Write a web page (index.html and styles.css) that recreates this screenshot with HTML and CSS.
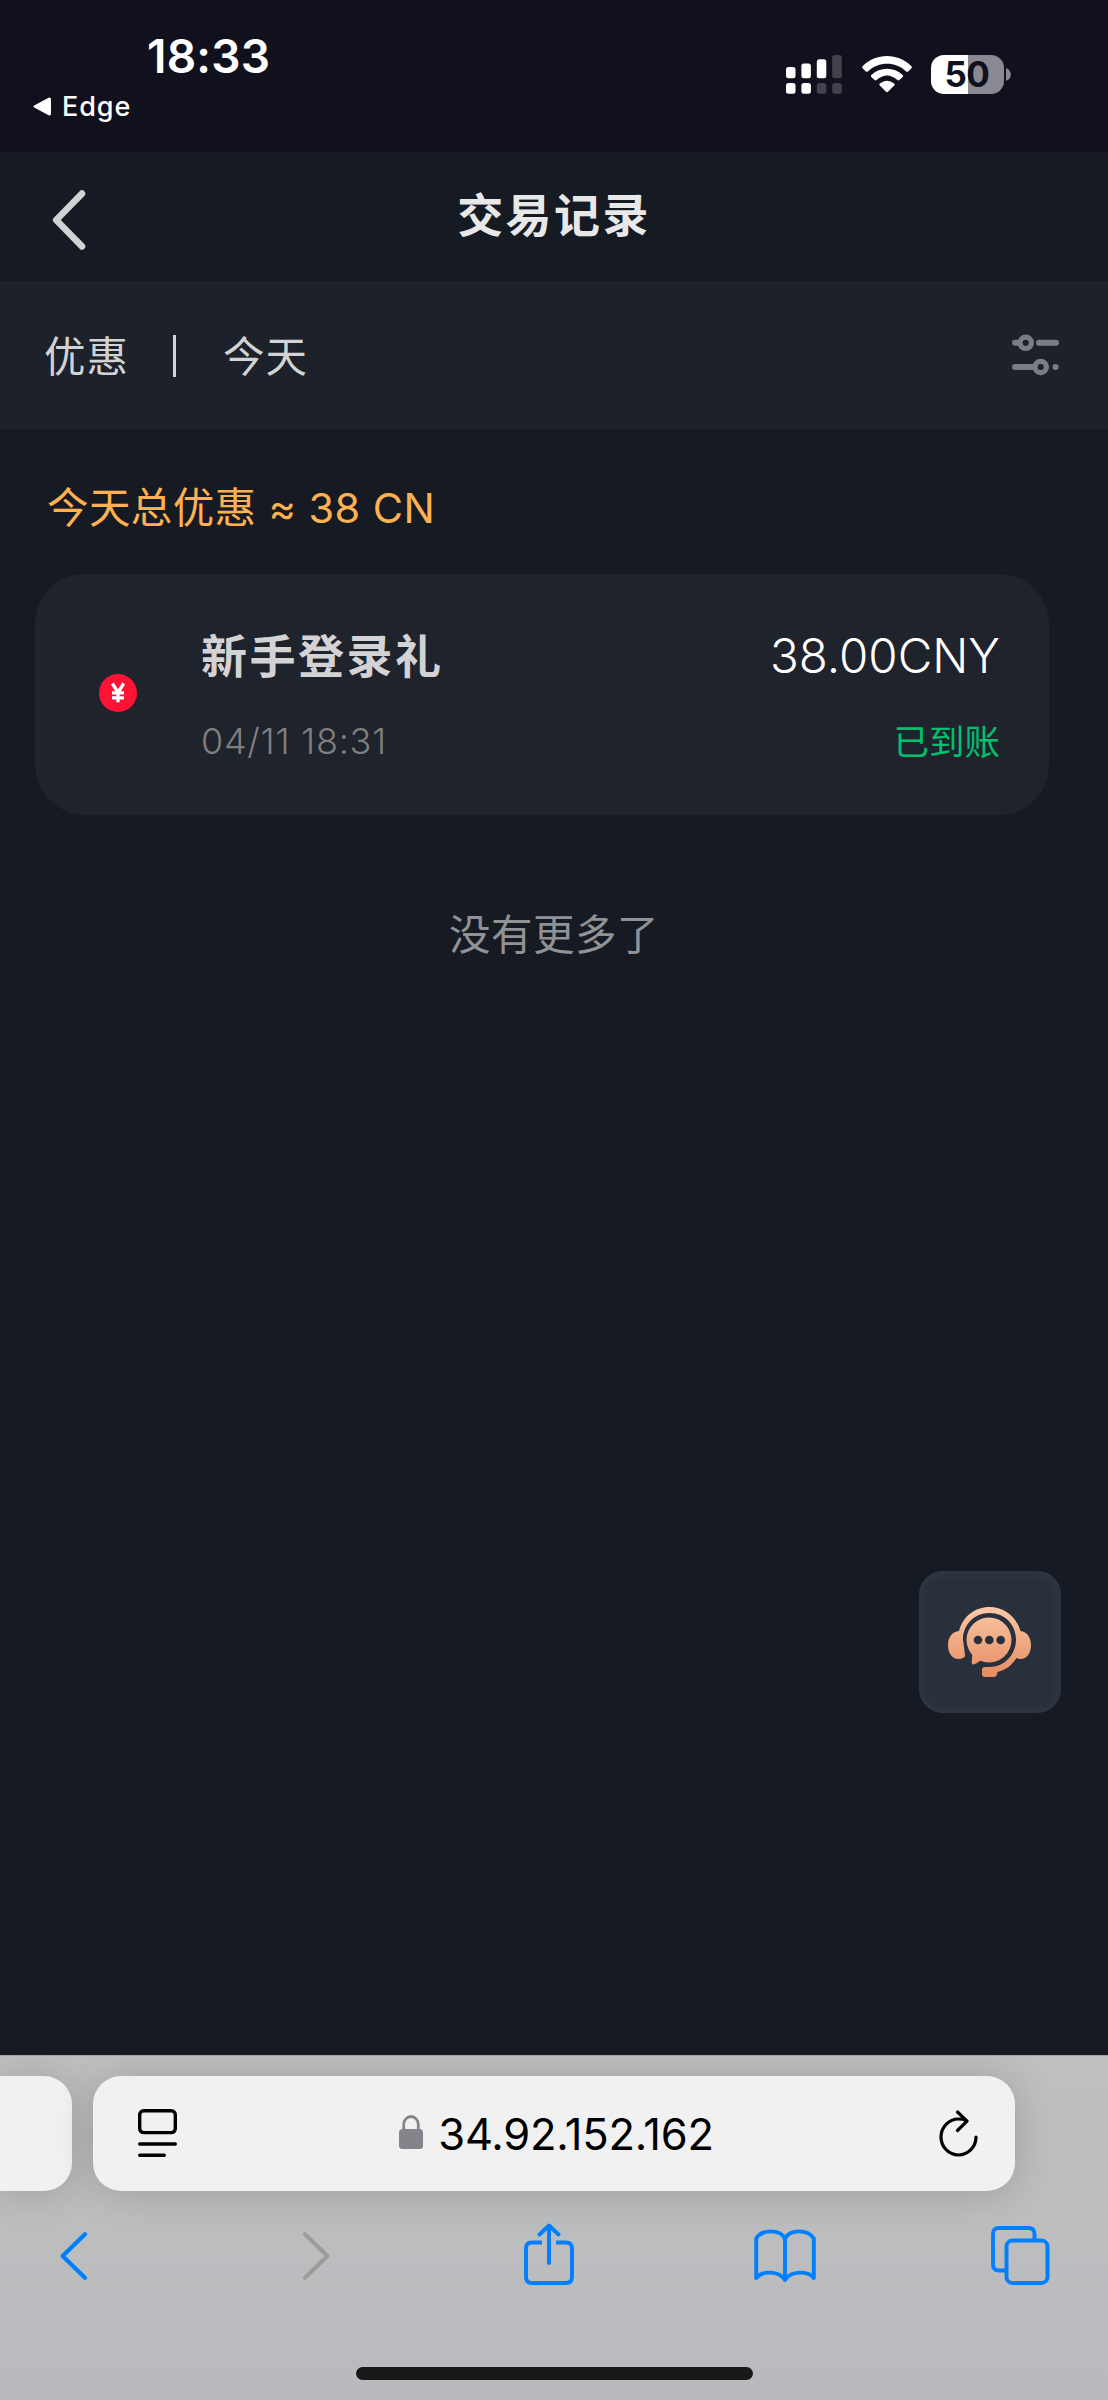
FILE: index.html
```html
<!DOCTYPE html>
<html lang="zh-CN">
<head>
<meta charset="utf-8">
<title>交易记录</title>
<link rel="stylesheet" href="styles.css">
</head>
<body>
<div class="screen">
  <div class="status">
    <div class="status-left">
      <div class="clock">18:33</div>
      <div class="return">
        <svg width="18" height="19" viewBox="0 0 18 19"><path d="M1.2 8.4 15.6.7Q18 0 18 2.5v14q0 2.5-2.4 1.8L1.2 10.6q-1.6-1.1 0-2.2z" fill="#fff"/></svg>
        <span>Edge</span>
      </div>
    </div>
    <div class="status-right">
      <svg class="signal" width="56" height="39" viewBox="0 0 56 39">
        <g fill="#fff"><rect y="12" width="9.5" height="11.2" rx="2.5"/><rect x="15.4" y="8.5" width="9.5" height="14.7" rx="2.5"/><rect x="30.8" y="4.2" width="9.5" height="19" rx="2.5"/><rect y="28" width="9.5" height="10.8" rx="2.5"/><rect x="15.4" y="28" width="9.5" height="10.8" rx="2.5"/></g>
        <g fill="#43424c"><rect x="46.2" y="0" width="9.6" height="23.2" rx="2.5"/><rect x="30.8" y="28" width="9.5" height="10.8" rx="2.5"/><rect x="46.2" y="28" width="9.6" height="10.8" rx="2.5"/></g>
      </svg>
      <svg class="wifi" width="50" height="37" viewBox="0 0 50 37" fill="#fff">
        <path d="M.6 10.2C14-3.3 36-3.3 49.4 10.2q1 1 0 2l-3.2 3.2q-1 .9-2 0C33.500 5.100 16.500 5.100 5.800 15.400q-1 .9-2 0L.6 12.200q-1-1 0-2z"/>
        <path d="M9.300 18.900C18 10.600 32 10.600 40.700 18.900q1 1 0 2l-3.300 3.200q-1 .9-2 0-10.400-9-20.800 0-1 .9-2 0L9.300 20.900q-1-1 0-2z"/>
        <path d="M17.800 27.600Q25 21.800 32.200 27.600q1.100 1 0 2L26 35.800q-1 .9-2 0L17.800 29.600q-1.100-1 0-2z"/>
      </svg>
      <div class="battery"><span>50</span></div>
      <svg class="nub" width="5" height="13" viewBox="0 0 5 13"><path d="M0 0Q4.800 2 4.800 6.500T0 13z" fill="#8a8992"/></svg>
    </div>
  </div>

  <div class="header">
    <svg class="back" width="34" height="60" viewBox="0 0 34 60"><path d="M30 3.600 4.200 30 30 56.400" fill="none" stroke="#d2d2d4" stroke-width="6.600" stroke-linecap="round" stroke-linejoin="round"/></svg>
    <h1>交易记录</h1>
  </div>

  <div class="filters">
    <span>优惠</span><i class="rule"></i><span>今天</span>
    <svg class="tune" width="47" height="42" viewBox="0 0 47 42" fill="none" stroke="#7b7d82" stroke-width="6" stroke-linecap="round">
      <path d="M3 8.800h4M27 8.800h17M3 33h18M43.500 33h.1"/><circle cx="13.700" cy="8.800" r="5.700" stroke-width="5.200"/><circle cx="28.700" cy="33" r="5.700" stroke-width="5.200"/>
    </svg>
  </div>

  <div class="content">
    <p class="total">今天总优惠 ≈ 38 CN</p>
    <div class="card">
      <svg class="coin" width="38" height="38" viewBox="0 0 38 38"><circle cx="19" cy="19" r="19" fill="#ff1236"/><path d="M13.300 9.500 19 18.500l5.700-9M19 18v10.200M13 18.900h12M13 23.800h12" fill="none" stroke="#fff" stroke-width="3.300"/></svg>
      <div class="info"><div class="name">新手登录礼</div><div class="date">04/11 18:31</div></div>
      <div class="result"><div class="amount">38.00CNY</div><div class="state">已到账</div></div>
    </div>
    <p class="more">没有更多了</p>
    <div class="support">
      <svg width="84" height="70" viewBox="0 0 84 70">
        <defs><linearGradient id="peach" x1="0" y1="0" x2="0" y2="70" gradientUnits="userSpaceOnUse"><stop offset="0" stop-color="#fac8a6"/><stop offset="1" stop-color="#e68b63"/></linearGradient></defs>
        <path fill="url(#peach)" d="M11 24C15 9 27 0 41.500 0S68 9 72.500 24C79 24.500 83 31 83 38c0 8-4 14-10.500 14q-2.500 0-4-1C64 58 58 63 49.500 65Q49 70 46 70H37q-3 0-3-3V63q0-3 3-3H41.500C56 60 68 48 68 32.500 68 18 57 6 41.500 6S15 18 15 32.500L17 48q.2 2-1.500 2.800Q13 52 10.500 52C4 52 0 46 0 38S4.500 24.500 11 24z"/>
        <path fill="url(#peach)" d="M41.500 10.500a22.500 22.500 0 1 1-9.300 43.200Q29 56.500 25.500 57.500q-2 .2-1.800-1.700L24.300 48A22.500 22.500 0 0 1 41.500 10.500z"/>
        <g fill="#28303c"><circle cx="30" cy="33" r="4.300"/><circle cx="41.300" cy="33" r="4.300"/><circle cx="52.700" cy="33" r="4.300"/></g>
      </svg>
    </div>
  </div>

  <div class="browser">
    <div class="tabs">
      <div class="tab-prev"></div>
      <div class="address">
        <svg class="reader" width="39" height="49" viewBox="0 0 39 49" fill="none" stroke="#000" stroke-width="3.400" stroke-linecap="round"><rect x="1.700" y="1.700" width="35.600" height="21.900" rx="4"/><path d="M1.700 35h35.600M1.700 46.200h24.600"/></svg>
        <div class="url">
          <svg width="24" height="34" viewBox="0 0 24 34"><rect y="14" width="24" height="20" rx="3.500" fill="#85848a"/><path d="M4.700 15V9.500a7.300 8 0 0 1 14.600 0V15" fill="none" stroke="#85848a" stroke-width="2.800"/></svg>
          <span>34.92.152.162</span>
        </div>
        <svg class="reload" width="39" height="48" viewBox="0 0 39 48" fill="none" stroke="#000" stroke-width="3.200" stroke-linecap="round" stroke-linejoin="round"><path d="M37 27A17.500 18 0 1 1 19.500 9Q24 9 27.500 10.400M18.500 2 28 11.200 18.500 20.500"/></svg>
      </div>
    </div>
    <div class="toolbar">
      <svg width="28" height="48" viewBox="0 0 28 48" fill="none" stroke="#007fff" stroke-width="4.200" stroke-linecap="round" stroke-linejoin="round"><path d="M25 2.300 2.600 24 25 45.700"/></svg>
      <svg class="fwd" width="28" height="48" viewBox="0 0 28 48" fill="none" stroke="#9c9c9e" stroke-width="4.200" stroke-linecap="round" stroke-linejoin="round"><path d="M3 2.300 25.400 24 3 45.700"/></svg>
      <svg class="share" width="50" height="62" viewBox="0 0 50 62" fill="none" stroke="#007fff" stroke-width="3.900" stroke-linecap="round" stroke-linejoin="round"><path d="M25 40V3M15.500 11.500 25 2.500l9.500 9"/><path stroke-linecap="butt" d="M18 19.500H8q-6 0-6 6V54q0 6 6 6H42q6 0 6-6V25.500q0-6-6-6H32"/></svg>
      <svg class="book" width="62" height="54" viewBox="0 0 62 54" fill="none" stroke="#007fff" stroke-width="3.900" stroke-linecap="round" stroke-linejoin="round"><path d="M31 9.500C26 0 8 0 2.200 9.500V49C8 41.500 25 41.500 31 51 37 41.500 54 41.500 59.800 49V9.500C54 0 36 0 31 9.500V51"/></svg>
      <svg class="copies" width="59" height="61" viewBox="0 0 59 61" fill="none" stroke="#007fff" stroke-width="3.900"><rect x="15.500" y="14.500" width="41" height="42.500" rx="6"/><path d="M43.500 14V8q0-6-6-6H8Q2 2 2 8V38.500q0 6 6 6h7"/></svg>
    </div>
    <div class="home"></div>
  </div>
</div>
</body>
</html>
```
FILE: styles.css
```css
* { box-sizing: border-box; margin: 0; padding: 0; }
body { background: #161b23; }
svg { display: block; flex: none; }
.screen {
  width: 1108px;
  height: 2400px;
  display: flex;
  flex-direction: column;
  overflow: hidden;
  background: #161b23;
  font-family: Inter, "Noto Sans CJK SC", sans-serif;
  white-space: nowrap;
}
.status {
  height: 152px;
  background: #11101d;
  color: #fff;
  display: flex;
  justify-content: space-between;
}
.status-left { padding: 27px 0 0 33px; }
.clock { margin-left: 114px; font-size: 46px; line-height: 58px; font-weight: 600; letter-spacing: 0.200px; }
.return { display: flex; align-items: center; gap: 11px; height: 42px; font-size: 27px; font-weight: 500; letter-spacing: 0.900px; }
.status-right { display: flex; align-items: flex-start; padding: 55px 97px 0 0; }
.wifi { margin: 0.500px 19px 0 20px; }
.battery {
  width: 73px;
  height: 39px;
  border-radius: 13px;
  background: linear-gradient(90deg, #fff 37px, #8a8992 37px);
  color: #11101d;
  font-size: 35px;
  font-weight: 700;
  line-height: 39px;
  text-align: center;
  letter-spacing: -0.500px;
}
.nub { margin: 13px 0 0 2.500px; }

.header { height: 129px; display: grid; grid-template-columns: 160px 1fr 160px; align-items: center; }
.back { margin: 7px 0 0 52px; }
.header h1 { margin-top: -4px; text-align: center; font-size: 46px; line-height: 60px; font-weight: 600; letter-spacing: 2.400px; color: #e8e8e9; }

.filters {
  height: 148px;
  padding: 0 49px 0 44px;
  display: flex;
  align-items: center;
  background: #1d2129;
  color: #d2d3d4;
  font-size: 41.500px;
  letter-spacing: 1px;
}
.filters span { margin-top: -2px; }
.rule { width: 3px; height: 42px; margin: 1px 47px 0 44px; background: #d2d3d4; }
.tune { margin: -1px 0 0 auto; }

.content { flex: 1; padding: 49px 0 0; display: flex; flex-direction: column; }
.total { margin-left: 47px; font-size: 41.500px; line-height: 60px; letter-spacing: 0.400px; color: #ffb14f; }
.card {
  width: 1014px;
  height: 241px;
  margin: 36px 0 0 35px;
  padding: 51px 49px 0 64px;
  border-radius: 50px;
  background: #1f232b;
  display: flex;
}
.coin { margin-top: 49px; }
.info { margin-left: 64px; }
.name { font-size: 46px; line-height: 62px; font-weight: 600; letter-spacing: 2.500px; color: #d3d3d5; }
.date { margin-top: 31px; font-size: 36px; line-height: 46px; font-weight: 300; letter-spacing: 0.700px; color: #7f7f80; }
.result { margin-left: auto; text-align: right; }
.amount { font-size: 47.500px; line-height: 62px; font-weight: 300; color: #fff; }
.state { margin-top: 33px; font-size: 35.500px; line-height: 46px; color: #00c06f; }
.more { margin-top: 90px; text-align: center; font-size: 41.500px; line-height: 60px; letter-spacing: 0.500px; color: #919295; }
.support {
  width: 142px;
  height: 142px;
  margin: 606px 47px 0 auto;
  padding: 36px 0 0 29px;
  border-radius: 24px;
  background: #28303c;
  box-shadow: inset 0 0 14px #353d49;
}

.browser {
  height: 345px;
  padding-top: 20px;
  background: linear-gradient(#bebfc0, #bcbdbf 55%, #bab9be);
  border-top: 1px solid #a5a5a9;
}
.tabs { display: flex; gap: 21px; height: 115px; }
.tab-prev, .address { background: #f1f1f2; box-shadow: 0 2px 40px rgba(0, 0, 0, .17); }
.tab-prev { width: 72px; border-radius: 0 28px 28px 0; }
.address { width: 922px; border-radius: 28px; padding: 0 37px 0 45px; display: flex; align-items: center; justify-content: space-between; }
.url { display: flex; align-items: center; gap: 15px; margin-right: 3px; font-size: 43.500px; letter-spacing: -0.250px; color: #000; }
.url svg { margin-top: -3px; }
.toolbar { display: flex; align-items: flex-start; height: 130px; padding: 41px 0 0 60px; }
.toolbar .fwd { margin-left: 214px; }
.toolbar .share { margin: -9px 0 0 194px; }
.toolbar .book { margin: -3px 0 0 180px; }
.toolbar .copies { margin: -6px 0 0 175px; }
.home { width: 397px; height: 13px; margin: 46px auto 0; border-radius: 7px; background: #181818; }
```
